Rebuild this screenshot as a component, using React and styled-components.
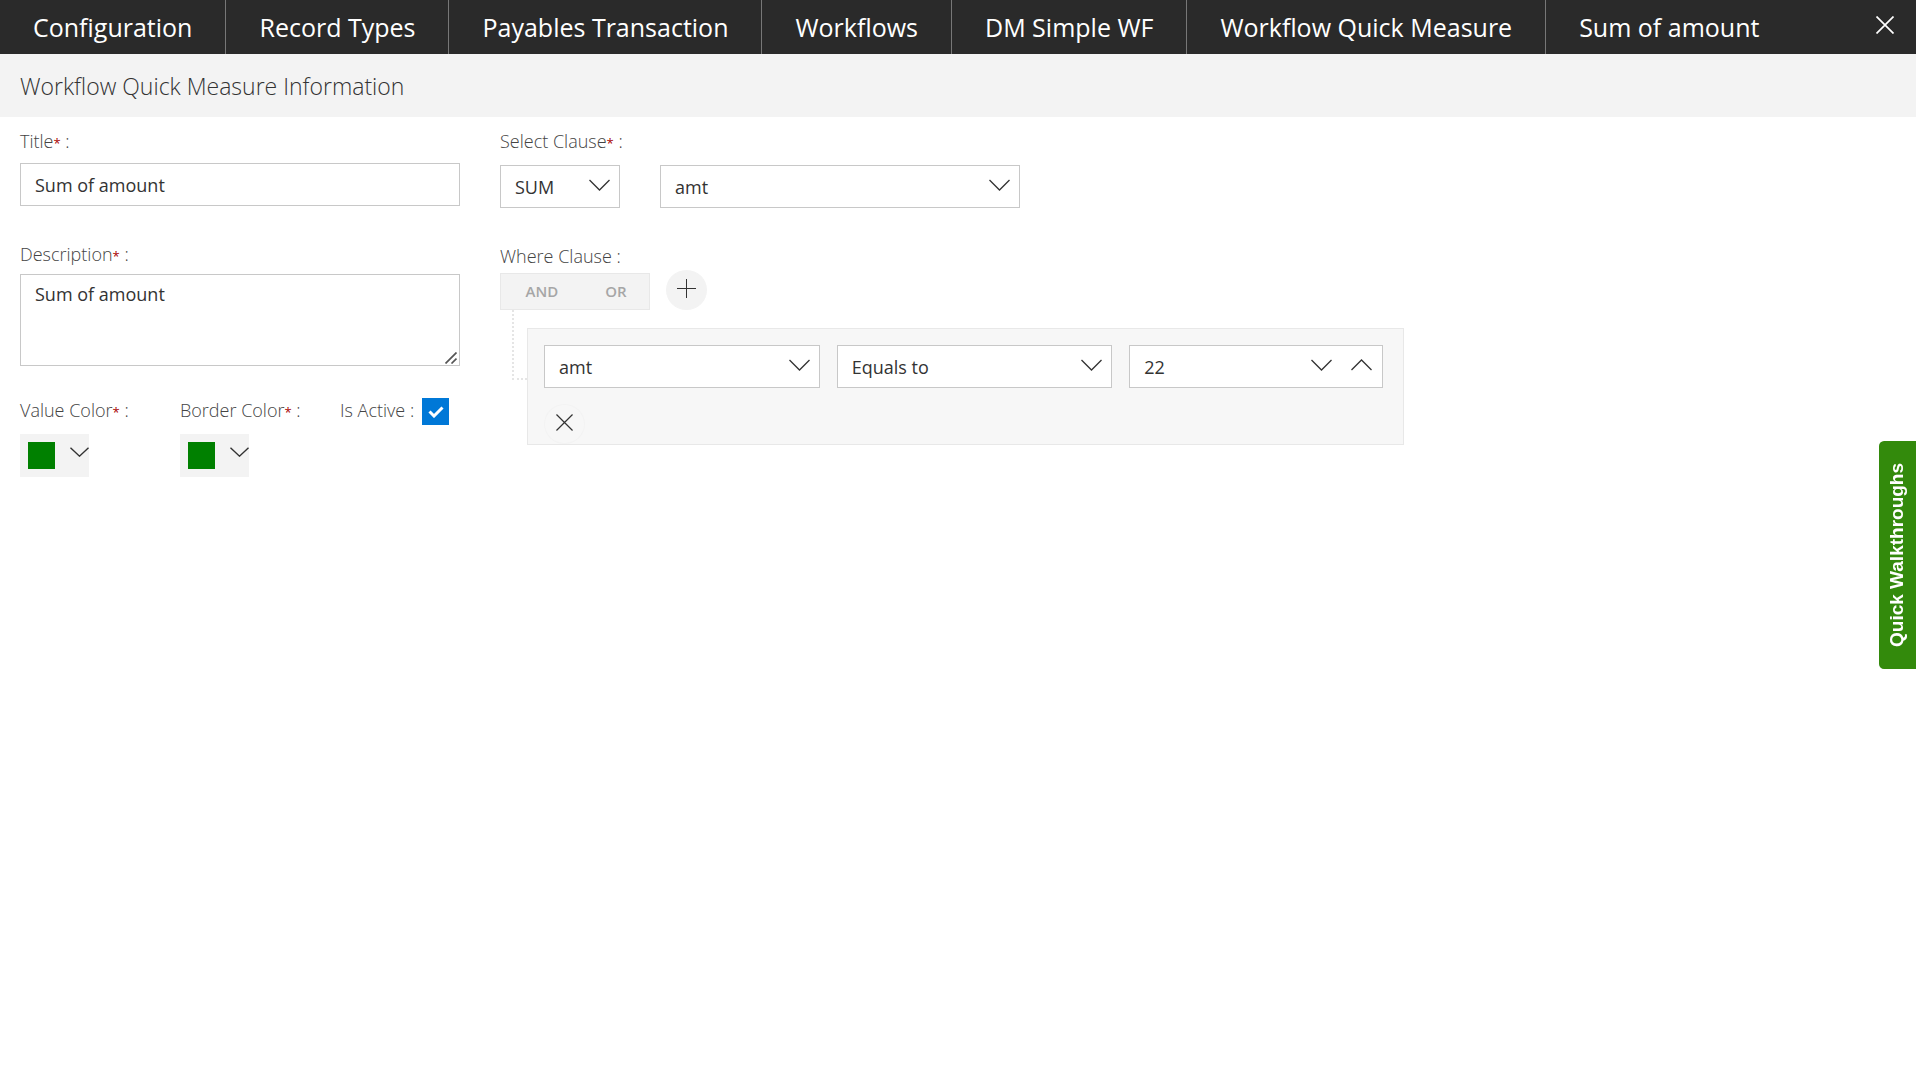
import React, { useState } from "react";
import styled, { createGlobalStyle } from "styled-components";

const GlobalStyle = createGlobalStyle`
  * {
    box-sizing: border-box;
  }

  body {
    margin: 0;
    background: #fff;
    color: #333;
    font-family: "Open Sans", "Noto Sans", sans-serif;
    font-size: 18px;
    line-height: 24px;
  }

  button, input, select, textarea {
    font: inherit;
    color: inherit;
  }
`;

const TopBar = styled.nav`
  display: flex;
  align-items: center;
  justify-content: space-between;
  height: 54px;
  background: #2a2a2a;
  color: #fff;
`;

const Crumbs = styled.div`
  display: flex;
  min-width: 0;
`;

const Crumb = styled.a`
  padding: 0 33px;
  font-size: 25px;
  line-height: 54px;
  color: #fff;
  text-decoration: none;
  white-space: nowrap;

  & + & {
    border-left: 1px solid #777;
  }
`;

const CloseButton = styled.button`
  display: flex;
  padding: 0;
  margin: 0 22px 4px 0;
  border: 0;
  background: none;
`;

const SectionTitle = styled.h1`
  margin: 0;
  padding: 2px 20px 0;
  background: #f3f3f3;
  font-size: 23px;
  font-weight: 300;
  line-height: 61px;
`;

const Form = styled.form`
  display: grid;
  grid-template-columns: minmax(0, 480px) minmax(0, 1fr);
`;

const Column = styled.div`
  padding: 12px 20px;
`;

const Label = styled.label`
  display: block;
  color: #444;
  font-weight: 300;
`;

const Required = styled.span`
  color: #a80000;
  font-size: 13px;
  font-weight: 400;
  line-height: 1;
`;

const Field = styled.div`
  display: flex;
  flex-direction: column;
  gap: ${(props) => props.$gap || 10}px;
  margin-bottom: ${(props) => props.$after || 32}px;
`;

const TextInput = styled.input`
  width: 100%;
  height: 43px;
  padding: 0 14px;
  border: 1px solid #c8c8c8;
  background: #fff;
`;

const TextAreaWrap = styled.div`
  display: grid;

  & > * {
    grid-area: 1 / 1;
  }

  svg {
    place-self: end;
    margin: 0 3px 2px 0;
    pointer-events: none;
  }
`;

const TextArea = styled.textarea`
  display: block;
  width: 100%;
  height: 92px;
  padding: 7px 14px;
  border: 1px solid #c8c8c8;
  resize: vertical;

  &::-webkit-resizer {
    background: none;
  }
`;

const ThirdsRow = styled.div`
  display: grid;
  grid-template-columns: repeat(3, 1fr);
  margin-right: -40px;
`;

const ColorButton = styled.button`
  display: flex;
  align-items: center;
  gap: 15px;
  width: 69px;
  height: 43px;
  padding: 0 0 0 8px;
  border: 0;
  background: #f3f3f3;

  svg {
    margin-bottom: 8px;
  }
`;

const Swatch = styled.span`
  width: 27px;
  height: 27px;
  background: ${(props) => props.$color};
`;

const CheckRow = styled.div`
  display: flex;
  align-items: flex-start;
  gap: 8px;
  white-space: nowrap;
`;

const CheckWrap = styled.span`
  display: grid;
  place-items: center;

  & > * {
    grid-area: 1 / 1;
  }

  svg {
    pointer-events: none;
  }
`;

const Checkbox = styled.input`
  appearance: none;
  width: 27px;
  height: 27px;
  margin: 0;
  border: 1px solid #0078d7;
  background: #fff;

  &:checked {
    background: #0078d7;
  }
`;

const SelectRow = styled.div`
  display: flex;
  gap: 40px;
`;

const SelectWrap = styled.div`
  display: grid;
  align-items: center;
  flex: 0 1 ${(props) => props.$width}px;
  min-width: 0;

  & > * {
    grid-area: 1 / 1;
  }

  svg {
    justify-self: end;
    margin: 0 10px 4px 0;
    pointer-events: none;
  }
`;

const SelectBox = styled.select`
  appearance: none;
  width: 100%;
  height: 43px;
  padding: 0 36px 0 14px;
  border: 1px solid #c8c8c8;
  border-radius: 0;
  background: #fff;
`;

const LogicRow = styled.div`
  display: flex;
  align-items: flex-end;
  gap: 16px;
  height: 40px;
  margin-top: 2px;
`;

const LogicGroup = styled.div`
  display: flex;
  width: 150px;
  height: 37px;
  border: 1px solid #e8e8e8;
  background: #f3f3f3;
`;

const LogicButton = styled.button`
  flex: ${(props) => props.$grow};
  padding: 0 0 2px;
  border: 0;
  background: none;
  color: #a6a6a6;
  font-size: 15px;
  font-weight: 600;
`;

const RoundButton = styled.button`
  display: grid;
  place-items: center;
  width: 41px;
  height: 40px;
  padding: 0 0 3px;
  border: 1px solid #f3f3f3;
  border-radius: 50%;
  background: ${(props) => (props.$plain ? "none" : "#f3f3f3")};
`;

const RuleRow = styled.div`
  display: flex;
  padding-left: 12px;
`;

const Branch = styled.div`
  width: 15px;
  height: 70px;
  border-left: 2px dotted #e5e5e5;
  border-bottom: 2px dotted #e5e5e5;
`;

const RulePanel = styled.div`
  flex: 0 1 877px;
  min-width: 0;
  margin-top: 18px;
  padding: 16px 20px 0 16px;
  border: 1px solid #e8e8e8;
  background: #f7f7f7;
`;

const RuleFields = styled.div`
  display: flex;
  gap: 17px;
  margin-bottom: 16px;
`;

const NumberBox = styled.div`
  display: flex;
  align-items: center;
  flex: 0 1 254px;
  min-width: 0;
  height: 43px;
  padding-right: 10px;
  border: 1px solid #c8c8c8;
  background: #fff;
`;

const NumberInput = styled.input`
  flex: 1;
  min-width: 0;
  padding: 0 14px;
  border: 0;
  background: none;
`;

const StepButton = styled.button`
  display: flex;
  padding: 0 0 4px;
  margin-left: 19px;
  border: 0;
  background: none;
`;

const Walkthroughs = styled.button`
  position: fixed;
  top: 441px;
  right: 0;
  width: 37px;
  height: 228px;
  padding: 0;
  border: 0;
  border-radius: 0 5px 5px 0;
  background: #338a0c;
  color: #fff;
  font-family: "Liberation Sans", Arial, sans-serif;
  font-size: 19px;
  font-weight: 700;
  line-height: 36px;
  writing-mode: vertical-rl;
  transform: rotate(180deg);
`;

const Chevron = ({ up, small }) => (
  <svg
    width={small ? 19 : 21}
    height={small ? 10 : 12}
    viewBox="0 0 21 12"
    preserveAspectRatio="none"
    fill="none"
    stroke="#333"
    strokeWidth={small ? 1.6 : 1.3}
  >
    <path d={up ? "M.5 11 10.5 1 20.5 11" : "M.5 1 10.5 11 20.5 1"} />
  </svg>
);

const Cross = ({ size, color, weight = 1.3 }) => (
  <svg width={size} height={size} viewBox="0 0 18 18" fill="none" stroke={color} strokeWidth={weight}>
    <path d="M.5 .5 17.5 17.5M17.5 .5 .5 17.5" />
  </svg>
);

const Dropdown = ({ id, label, width, options }) => (
  <SelectWrap $width={width}>
    <SelectBox id={id} aria-label={label}>
      {options.map((option) => (
        <option key={option}>{option}</option>
      ))}
    </SelectBox>
    <Chevron />
  </SelectWrap>
);

const crumbs = [
  "Configuration",
  "Record Types",
  "Payables Transaction",
  "Workflows",
  "DM Simple WF",
  "Workflow Quick Measure",
  "Sum of amount",
];

const App = () => {
  const [title, setTitle] = useState("Sum of amount");
  const [description, setDescription] = useState("Sum of amount");
  const [active, setActive] = useState(true);
  const [amount, setAmount] = useState(22);

  return (
    <>
      <GlobalStyle />
      <TopBar>
        <Crumbs>
          {crumbs.map((crumb) => (
            <Crumb key={crumb} href="#">{crumb}</Crumb>
          ))}
        </Crumbs>
        <CloseButton type="button" aria-label="Close">
          <Cross size={18} color="#fff" weight={1.7} />
        </CloseButton>
      </TopBar>
      <SectionTitle>Workflow Quick Measure Information</SectionTitle>

      <Form onSubmit={(e) => e.preventDefault()}>
        <Column>
          <Field $after={36}>
            <Label htmlFor="title">Title<Required>*</Required> :</Label>
            <TextInput id="title" value={title} onChange={(e) => setTitle(e.target.value)} />
          </Field>
          <Field $gap={8}>
            <Label htmlFor="description">Description<Required>*</Required> :</Label>
            <TextAreaWrap>
              <TextArea
                id="description"
                value={description}
                onChange={(e) => setDescription(e.target.value)}
              />
              <svg width="12" height="12" viewBox="0 0 12 12" stroke="#555" strokeWidth="1.7">
                <path d="M.5 11.5 11.5 .5M6.5 11.5 11.5 6.5" />
              </svg>
            </TextAreaWrap>
          </Field>
          <ThirdsRow>
            <Field $gap={12}>
              <Label htmlFor="valueColor">Value Color<Required>*</Required> :</Label>
              <ColorButton id="valueColor" type="button">
                <Swatch $color="#008000" />
                <Chevron small />
              </ColorButton>
            </Field>
            <Field $gap={12}>
              <Label htmlFor="borderColor">Border Color<Required>*</Required> :</Label>
              <ColorButton id="borderColor" type="button">
                <Swatch $color="#008000" />
                <Chevron small />
              </ColorButton>
            </Field>
            <CheckRow>
              <Label htmlFor="active">Is Active :</Label>
              <CheckWrap>
                <Checkbox
                  id="active"
                  type="checkbox"
                  checked={active}
                  onChange={(e) => setActive(e.target.checked)}
                />
                {active && (
                  <svg width="16" height="12" viewBox="0 0 16 12" fill="none" stroke="#fff" strokeWidth="3">
                    <path d="M1.5 5.5 6 10 14.5 1.5" />
                  </svg>
                )}
              </CheckWrap>
            </CheckRow>
          </ThirdsRow>
        </Column>

        <Column>
          <Field $gap={12} $after={36}>
            <Label htmlFor="aggregate">Select Clause<Required>*</Required> :</Label>
            <SelectRow>
              <Dropdown id="aggregate" width={120} options={["SUM", "COUNT", "AVG"]} />
              <Dropdown label="Field" width={360} options={["amt"]} />
            </SelectRow>
          </Field>
          <Label as="div">Where Clause :</Label>
          <LogicRow>
            <LogicGroup>
              <LogicButton type="button" $grow={83}>AND</LogicButton>
              <LogicButton type="button" $grow={67}>OR</LogicButton>
            </LogicGroup>
            <RoundButton type="button" aria-label="Add rule">
              <svg width="19" height="19" viewBox="0 0 19 19" stroke="#333" strokeWidth="1">
                <path d="M9.5 0V19M0 9.5H19" />
              </svg>
            </RoundButton>
          </LogicRow>
          <RuleRow>
            <Branch />
            <RulePanel>
              <RuleFields>
                <Dropdown label="Rule field" width={276} options={["amt"]} />
                <Dropdown label="Operator" width={276} options={["Equals to", "Not equals to"]} />
                <NumberBox>
                  <NumberInput
                    aria-label="Value"
                    value={amount}
                    onChange={(e) => setAmount(Number(e.target.value) || 0)}
                  />
                  <StepButton type="button" aria-label="Decrease" onClick={() => setAmount(amount - 1)}>
                    <Chevron />
                  </StepButton>
                  <StepButton type="button" aria-label="Increase" onClick={() => setAmount(amount + 1)}>
                    <Chevron up />
                  </StepButton>
                </NumberBox>
              </RuleFields>
              <RoundButton type="button" $plain aria-label="Remove rule">
                <Cross size={17} color="#333" />
              </RoundButton>
            </RulePanel>
          </RuleRow>
        </Column>
      </Form>

      <Walkthroughs type="button">Quick Walkthroughs</Walkthroughs>
    </>
  );
};

export default App;
